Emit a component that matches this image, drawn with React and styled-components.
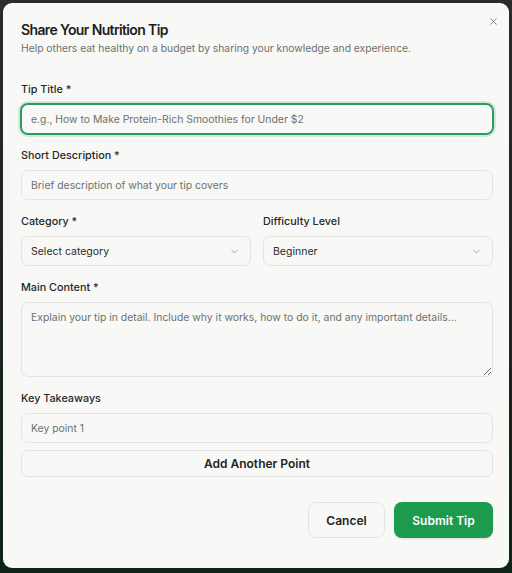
import React from "react";
import styled, { createGlobalStyle } from "styled-components";
import { ChevronDown, X } from "lucide-react";

const Global = createGlobalStyle`
  html, body { margin: 0; padding: 0; }
  body {
    width: 512px;
    height: 573px;
    overflow: hidden;
    background: linear-gradient(180deg, #2a2b2a 0%, #1c241f 60%, #0e2416 100%);
    font-family: Inter, "Noto Sans", sans-serif;
  }
  * { box-sizing: border-box; }
`;

const Stage = styled.div`
  padding: 3px 3px 5px 3px;
  height: 573px;
`;

const Dialog = styled.div`
  position: relative;
  height: 565px;
  background: #f8f8f7;
  border-radius: 9px;
  padding: 17px 16px 0 18px;
  display: flex;
  flex-direction: column;
`;

const Close = styled.button`
  position: absolute;
  top: 13px;
  right: 10px;
  border: none;
  background: transparent;
  padding: 0;
  color: #6f6f6f;
  display: flex;
`;

const Title = styled.h2`
  margin: 0;
  font-size: 14px;
  line-height: 19px;
  font-weight: 600;
  color: #1d1d1d;
  letter-spacing: -0.045em;
`;

const Subtitle = styled.p`
  margin: 1px 0 0;
  font-size: 10.3px;
  line-height: 16px;
  color: #6c716e;
`;

const Form = styled.div`
  margin-top: 26px;
  display: flex;
  flex-direction: column;
  gap: 14px;
`;

const Field = styled.div`
  display: flex;
  flex-direction: column;
  gap: 6px;
  min-width: 0;
`;

const Row = styled.div`
  display: grid;
  grid-template-columns: 1fr 1fr;
  gap: 12px;
`;

const Label = styled.label`
  font-size: 10.8px;
  line-height: 16px;
  font-weight: 500;
  color: #262826;
`;

const Input = styled.input`
  height: 30px;
  width: 100%;
  border: 1px solid ${(p) => (p.$focused ? "#2d9a5a" : "#e4e5e3")};
  box-shadow: ${(p) => (p.$focused ? "0 0 0 1px #2d9a5a, 0 0 0 3px #cfe8d8" : "none")};
  border-radius: 7px;
  background: #f8f8f7;
  padding: 0 9px;
  font-family: inherit;
  font-size: 10.4px;
  color: #222;
  outline: none;
  &::placeholder { color: #6b726e; }
`;

const SelectBox = styled.div`
  height: 30px;
  border: 1px solid #e4e5e3;
  border-radius: 7px;
  background: #f8f8f7;
  padding: 0 10px 0 9px;
  display: flex;
  align-items: center;
  justify-content: space-between;
  font-size: 10.5px;
  color: #2a2c2a;
`;

const TextArea = styled.textarea`
  height: 75px;
  width: 100%;
  border: 1px solid #e4e5e3;
  border-radius: 7px;
  background: #f8f8f7;
  padding: 7px 9px;
  font-family: inherit;
  font-size: 10.4px;
  line-height: 15px;
  resize: vertical;
  outline: none;
  &::placeholder { color: #6b726e; }
`;

const Takeaways = styled.div`
  display: flex;
  flex-direction: column;
  gap: 7px;
`;

const OutlineButton = styled.button`
  height: ${(p) => (p.$tall ? "36px" : "27px")};
  width: ${(p) => (p.$tall ? "77px" : "100%")};
  border: 1px solid #e4e5e3;
  border-radius: ${(p) => (p.$tall ? "8px" : "7px")};
  background: #f8f8f7;
  font-family: inherit;
  font-size: 12px;
  font-weight: 600;
  color: #232523;
  cursor: pointer;
`;

const PrimaryButton = styled.button`
  height: 36px;
  width: 99px;
  border: none;
  border-radius: 8px;
  background: #1c9a4d;
  font-family: inherit;
  font-size: 12px;
  font-weight: 600;
  color: #fff;
  box-shadow: 0 1px 2px rgba(0,0,0,0.12);
  cursor: pointer;
`;

const Footer = styled.div`
  margin-top: 25px;
  display: flex;
  justify-content: flex-end;
  gap: 9px;
`;

const Chevron = styled(ChevronDown)`
  color: #8a8d8b;
`;

function Select({ value }) {
  return (
    <SelectBox>
      <span>{value}</span>
      <Chevron size={11} strokeWidth={1.6} />
    </SelectBox>
  );
}

export default function App() {
  return (
    <>
      <Global />
      <Stage>
        <Dialog>
          <Close aria-label="Close">
            <X size={11} strokeWidth={1.8} />
          </Close>
          <Title>Share Your Nutrition Tip</Title>
          <Subtitle>
            Help others eat healthy on a budget by sharing your knowledge and experience.
          </Subtitle>
          <Form>
            <Field>
              <Label>Tip Title *</Label>
              <Input $focused placeholder="e.g., How to Make Protein-Rich Smoothies for Under $2" />
            </Field>
            <Field>
              <Label>Short Description *</Label>
              <Input placeholder="Brief description of what your tip covers" />
            </Field>
            <Row>
              <Field>
                <Label>Category *</Label>
                <Select value="Select category" />
              </Field>
              <Field>
                <Label>Difficulty Level</Label>
                <Select value="Beginner" />
              </Field>
            </Row>
            <Field>
              <Label>Main Content *</Label>
              <TextArea placeholder="Explain your tip in detail. Include why it works, how to do it, and any important details..." />
            </Field>
            <Field>
              <Label>Key Takeaways</Label>
              <Takeaways>
                <Input placeholder="Key point 1" />
                <OutlineButton>Add Another Point</OutlineButton>
              </Takeaways>
            </Field>
          </Form>
          <Footer>
            <OutlineButton $tall>Cancel</OutlineButton>
            <PrimaryButton>Submit Tip</PrimaryButton>
          </Footer>
        </Dialog>
      </Stage>
    </>
  );
}
